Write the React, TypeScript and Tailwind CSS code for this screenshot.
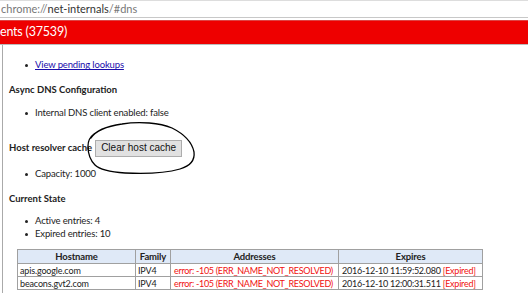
const rows = [
  { host: 'apis.google.com', family: 'IPV4', addr: 'error: -105 (ERR_NAME_NOT_RESOLVED)', exp: '2016-12-10 11:59:52.080' },
  { host: 'beacons.gvt2.com', family: 'IPV4', addr: 'error: -105 (ERR_NAME_NOT_RESOLVED)', exp: '2016-12-10 12:00:31.511' },
]

function Bullet({ children }: { children: React.ReactNode }) {
  return (
    <div className="flex items-center h-[13px] pl-[22px] text-[9.5px] tracking-[-0.15px]">
      <span className="w-[3px] h-[3px] rounded-full bg-[#222] mr-[7px]" />
      <span>{children}</span>
    </div>
  )
}

export default function App() {
  return (
    <div className="relative w-[528px] h-[293px] overflow-hidden bg-white text-[11px] text-[#222]" style={{ fontFamily: 'Lato, sans-serif' }}>
      {/* address bar */}
      <div className="h-[18px] border-t border-[#ddd] border-b border-b-[#c8c8c8] flex items-center pl-[1px] text-[11px] text-[#777]">
        chrome://<span className="text-[#333]">net-internals</span>/#dns
      </div>
      <div className="h-[2px]" />
      {/* red title bar */}
      <div className="h-[25px] bg-[#ee0000] border-t border-[#d44] border-b border-b-[#bbb] flex items-center text-white text-[12.5px] tracking-[-0.2px] leading-none">
        ents (37539)
      </div>

      <div className="ml-[2px] border-l border-[#aaa] h-[250px] pt-[14px]">
        <Bullet>
          <a className="text-[#1a0dab] underline" href="#">View pending lookups</a>
        </Bullet>
        <div className="mt-[11px] h-[13px] leading-[13px] pl-[6px] font-bold text-[9.5px]">Async DNS Configuration</div>
        <div className="mt-[11px]">
          <Bullet>Internal DNS client enabled: false</Bullet>
        </div>
        <div className="mt-[20px] flex items-center h-[16px] pl-[6px]">
          <span className="font-bold text-[9.5px]">Host resolver cache</span>
          <button
            className="ml-[3px] h-[17px] px-[5px] border border-[#adadad] bg-[#e1e1e1] text-[10px] text-[#111] leading-none"
            style={{ fontFamily: '"Liberation Sans", Arial, sans-serif' }}
          >
            Clear host cache
          </button>
        </div>
        <div className="mt-[12px]">
          <Bullet>Capacity: 1000</Bullet>
        </div>
        <div className="mt-[11px] h-[13px] leading-[13px] pl-[6px] font-bold text-[9.5px]">Current State</div>
        <div className="mt-[10px]">
          <Bullet>Active entries: 4</Bullet>
          <Bullet>Expired entries: 10</Bullet>
        </div>

        <table className="mt-[8px] ml-[14px] border-collapse table-fixed w-[465px] text-[9px] tracking-[-0.15px]">
          <colgroup>
            <col className="w-[118px]" />
            <col className="w-[35px]" />
            <col className="w-[168px]" />
            <col className="w-[144px]" />
          </colgroup>
          <thead>
            <tr className="bg-[#dfe9f7] h-[14px] leading-[12px]">
              <th className="border border-[#a0a0a0] font-bold text-[9.5px]">Hostname</th>
              <th className="border border-[#a0a0a0] font-bold text-[9.5px]">Family</th>
              <th className="border border-[#a0a0a0] font-bold text-[9.5px]">Addresses</th>
              <th className="border border-[#a0a0a0] font-bold text-[9.5px]">Expires</th>
            </tr>
          </thead>
          <tbody>
            {rows.map((r) => (
              <tr key={r.host} className="h-[13px] leading-[11px]">
                <td className="border border-[#a0a0a0] px-[2px] whitespace-nowrap overflow-hidden">{r.host}</td>
                <td className="border border-[#a0a0a0] px-[2px] whitespace-nowrap overflow-hidden">{r.family}</td>
                <td className="border border-[#a0a0a0] px-[3px] text-[#f01010] whitespace-nowrap overflow-hidden tracking-[-0.3px]">{r.addr}</td>
                <td className="border border-[#a0a0a0] px-[3px] whitespace-nowrap overflow-hidden tracking-[-0.25px]">
                  {r.exp} <span className="text-[#f01010]">[Expired]</span>
                </td>
              </tr>
            ))}
          </tbody>
        </table>
      </div>

      {/* hand-drawn ellipse annotation */}
      <svg className="absolute left-0 top-0 pointer-events-none" width="528" height="293" viewBox="0 0 528 293">
        <path
          d="M91 138 C96 130 108 126 122 124 C140 121 160 123 172 128 C184 134 192 142 194 152 C195 160 190 166 180 169 C166 173 145 174 125 173 C110 172 100 170 95 165 C90 160 88 152 88 146 C88 141 90 137 94 134"
          fill="none"
          stroke="#000"
          strokeWidth="1.3"
          strokeLinecap="round"
        />
      </svg>
    </div>
  )
}
